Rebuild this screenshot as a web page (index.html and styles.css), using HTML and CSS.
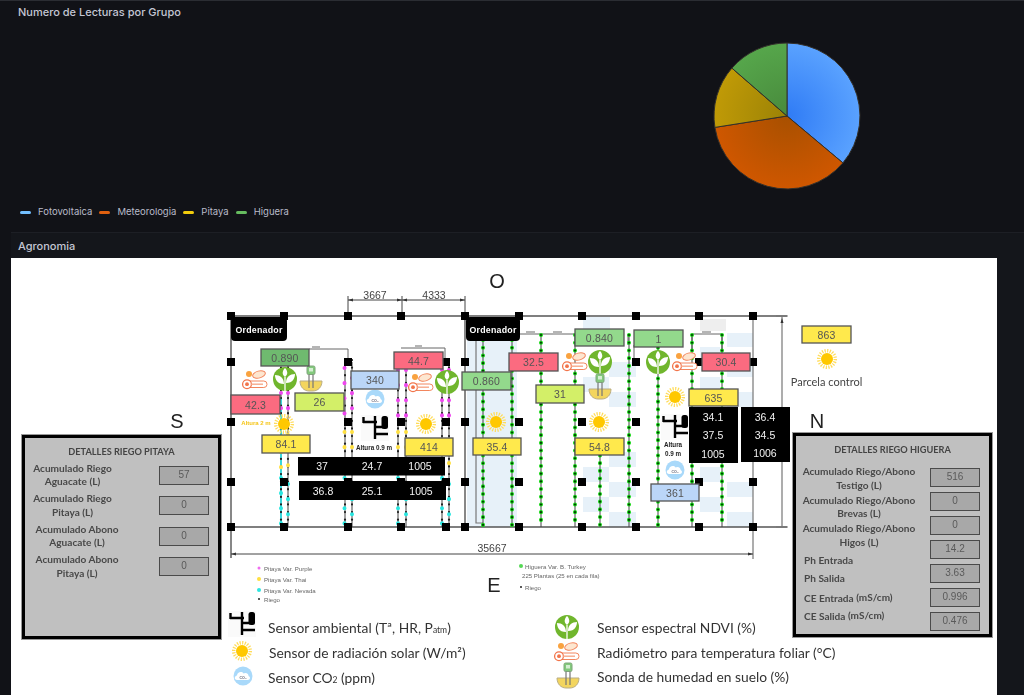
FILE: index.html
```html
<!DOCTYPE html>
<html lang="es">
<head>
<meta charset="utf-8">
<title>Agronomia</title>
<link rel="stylesheet" href="styles.css">
</head>
<body>
<section class="pie-panel">
  <h2 class="panel-title">Numero de Lecturas por Grupo</h2>
  <div class="pie-area">
    <svg class="pie" width="148" height="148" viewBox="-74 -74 148 148" aria-label="Numero de lecturas">
      <defs>
        <radialGradient id="gb" gradientUnits="userSpaceOnUse" cx="0" cy="0" r="73"><stop offset="0" stop-color="#2f7bf5"/><stop offset="1" stop-color="#5aa2ff"/></radialGradient>
        <radialGradient id="go" gradientUnits="userSpaceOnUse" cx="0" cy="0" r="73"><stop offset="0" stop-color="#a85000"/><stop offset="1" stop-color="#cf5700"/></radialGradient>
        <radialGradient id="gy" gradientUnits="userSpaceOnUse" cx="0" cy="0" r="73"><stop offset="0" stop-color="#9b8206"/><stop offset="1" stop-color="#c09a06"/></radialGradient>
        <radialGradient id="gg" gradientUnits="userSpaceOnUse" cx="0" cy="0" r="73"><stop offset="0" stop-color="#488a3c"/><stop offset="1" stop-color="#56a64b"/></radialGradient>
      </defs>
      <path class="slice" fill="url(#gb)" d="M0 0V-73A73 73 0 0 1 55.9 46.9Z"/>
      <path class="slice" fill="url(#go)" d="M0 0L55.9 46.9A73 73 0 0 1 -72.1 11.4Z"/>
      <path class="slice" fill="url(#gy)" d="M0 0L-72.1 11.4A73 73 0 0 1 -55.1 -47.9Z"/>
      <path class="slice" fill="url(#gg)" d="M0 0L-55.1 -47.9A73 73 0 0 1 0 -73Z"/>
    </svg>
  </div>
  <ul class="legend">
    <li class="legend-item"><span class="swatch swatch-blue"></span>Fotovoltaica</li>
    <li class="legend-item"><span class="swatch swatch-orange"></span>Meteorologia</li>
    <li class="legend-item"><span class="swatch swatch-yellow"></span>Pitaya</li>
    <li class="legend-item"><span class="swatch swatch-green"></span>Higuera</li>
  </ul>
</section>

<section class="agro-panel">
  <h2 class="panel-title agro-title">Agronomia</h2>
  <div class="canvas">
    <svg class="plan" width="986" height="437" viewBox="11 258 986 437">
      <defs>
        <g id="sun"><circle r="8.3" class="sun-rays"/><circle r="6" class="sun-core"/></g>
        <g id="ndvi">
          <circle r="12" fill="#70b62d"/>
          <path fill="#fff" d="M-1 5C-8 5-10 0-10-4-5-4-1-1-1 5ZM1 4C8 4 10-1 10-5 5-5 1-2 1 4ZM0-2C-4-5-2-9 0-11 2-9 4-5 0-2Z"/>
          <path stroke="#fff" stroke-width="1.3" fill="none" d="M0 12V-2"/>
        </g>
        <g id="radio">
          <circle cx="-6" cy="-6" r="3" fill="#f9a23f"/>
          <ellipse cx="4" cy="-5.5" rx="6.5" ry="3.5" transform="rotate(-15 4 -5.500)" fill="#fde6d0" stroke="#f2865e"/>
          <rect x="-9" y="1" width="21" height="6.5" rx="3.2" fill="#fff" stroke="#f2865e"/>
          <circle cx="-8" cy="4.2" r="4.4" fill="#fff" stroke="#f2744a" stroke-width="1.3"/>
          <circle cx="-8" cy="4.2" r="1.9" fill="#f2744a"/>
          <path d="M-4 4.2H8" stroke="#f7a98a" stroke-width="1.4"/>
        </g>
        <g id="soil">
          <path fill="#f3d55e" stroke="#b9ad84" d="M-11 2H11C11 8 7 12 2 12H-2C-7 12-11 8-11 2Z"/>
          <rect x="-4" y="-13" width="8" height="8.5" rx="1.5" fill="#82c97c" stroke="#7fa67a"/>
          <rect x="-2" y="-11" width="4" height="3.500" fill="#d5eed2"/>
          <path stroke="#777" stroke-width="1.2" fill="none" d="M-2-4.500V9M2-4.500V9"/>
        </g>
        <g id="co2">
          <circle r="9.5" fill="#a9d9fa"/>
          <path fill="#fff" d="M-6 4C-9 4-9 0-6-.5-6-4-1-5 .5-2.5 3-4 6-2 5.5 0 8 1 7 4 5 4Z"/>
          <text class="co2-mini" y="1.6">CO₂</text>
        </g>
        <g id="amb">
          <rect x="-14" y="-13" width="28" height="26" fill="#fafafa"/>
          <path stroke="#000" stroke-width="2.4" fill="none" d="M-12-6H2M-11.5-11V-5M0-12V11M0-1H8M0 6H13"/>
          <rect x="6.5" y="-12" width="6.5" height="13" rx="2.5"/>
        </g>
      </defs>

      <!-- background patches -->
      <path class="patch" d="M467 340h50v187h-50zM583 317h27v16h-27zM727 333h26v14h-26zM700 347h20v15h-20zM727 362h26v15h-26zM700 377h20v15h-20zM727 392h26v15h-26zM609 362h27v15h-27zM583 377h26v15h-26zM609 392h27v15h-27zM609 452h27v15h-27zM583 467h26v15h-26zM609 482h27v15h-27zM583 497h26v15h-26zM609 512h27v15h-27zM700 467h20v15h-20zM727 482h26v15h-26zM700 497h20v15h-20zM727 512h26v15h-26z"/>
      <rect class="patch-grey" x="700" y="319" width="26" height="12"/>

      <!-- structure -->
      <path class="wall" d="M231 316H787M231 527H787M231 316V558M465 316V527"/>
      <path class="wall-light" d="M476 340V523H483M753 316V559M782 316V527M776 527H788M776 316H788"/>
      <path class="dim" d="M231 554H753M348 296V316M402 296V316M465 296V316M348 300H465"/>
      <path class="arrow" d="M348 300l5-1.500v3zM402 300l-5-1.500v3zM402 300l5-1.500v3zM465 300l-5-1.500v3zM231 554l5-1.500v3zM753 554l-5-1.500v3zM782 318l-1.500 5h3z"/>
      <path class="conn" d="M309 349H348V362M401 348H445V362M520 334H575M514 334H519M692 334H722M692 334V352M722 334V352M628 334V345M634 345V362"/>
      <path class="tick" d="M526 331h9v4h-9zM553 331h9v4h-9zM702 331h9v4h-9zM312 346h8v3h-8zM415 345h7v3h-7z"/>

      <!-- pitaya rows -->
      <path class="row-line" d="M281 392V527M288 362V527M345 362V527M352 362V527M398 362V527M406 362V527M442 362V527M449 362V527"/>
      <path class="cyan-line" d="M281 398V527"/>
      <path class="dots dots-black" d="M281 360V527M288 360V527M345 360V527M352 360V527M398 360V527M406 360V527M442 360V527M449 360V527"/>
      <path class="dots dots-magenta" d="M288 393V422M281 393V422M344.500 368V420M352 378V422M398 370V422M406 370V422M442 370V422M449 370V422"/>
      <path class="dots dots-yellow" d="M281 452V475M288 435V470M344.500 432V470M352 432V470M398 432V470M406 432V470M442 448V470M449 448V470"/>
      <path class="dots dots-cyan" d="M281 478V527M288 484V527M344.500 478V527M352 484V527M398 478V527M406 484V527M442 478V527M449 484V527"/>

      <!-- higuera rows -->
      <path class="row-line" d="M483 340V527M512 340V527M541 335V527M575 335V527M600 440V527M629 335V527M658 340V527M692 335V527M722 335V527"/>
      <path class="dots dots-green" d="M483 340V527M512 340V527M541 335V527M575 335V527M600 440V527M629 335V527M658 340V527M692 335V527M722 335V527"/>
      <path class="dots dots-dark" d="M483 340V527M512 340V527M541 335V527M575 335V527M600 440V527M629 335V527M658 340V527M692 335V527M722 335V527"/>

      <!-- posts -->
      <path d="M227 312h8v8h-8zM280 312h8v8h-8zM344 312h8v8h-8zM397 312h8v8h-8zM461 312h8v8h-8zM515 312h8v8h-8zM578 312h8v8h-8zM632 312h8v8h-8zM695 312h8v8h-8zM749 312h8v8h-8zM227 358h8v8h-8zM344 358h8v8h-8zM442 358h8v8h-8zM461 358h8v8h-8zM632 358h8v8h-8zM695 358h8v8h-8zM749 358h8v8h-8zM227 418h8v8h-8zM344 418h8v8h-8zM397 418h8v8h-8zM442 418h8v8h-8zM461 418h8v8h-8zM515 418h8v8h-8zM578 418h8v8h-8zM632 418h8v8h-8zM227 478h8v8h-8zM280 478h8v8h-8zM344 478h8v8h-8zM397 478h8v8h-8zM442 478h8v8h-8zM461 478h8v8h-8zM515 478h8v8h-8zM578 478h8v8h-8zM632 478h8v8h-8zM695 478h8v8h-8zM749 478h8v8h-8zM227 523h8v8h-8zM280 523h8v8h-8zM344 523h8v8h-8zM397 523h8v8h-8zM442 523h8v8h-8zM461 523h8v8h-8zM515 523h8v8h-8zM578 523h8v8h-8zM632 523h8v8h-8zM695 523h8v8h-8zM749 523h8v8h-8z"/>

      <!-- ordenador -->
      <rect x="231" y="317" width="56" height="24" rx="4"/>
      <rect x="466" y="317" width="54" height="24" rx="4"/>
      <text class="t-ord" x="259" y="329.500">Ordenador</text>
      <text class="t-ord" x="493" y="329.500">Ordenador</text>

      <!-- dimensions and compass -->
      <text class="t-dim" x="375" y="295">3667</text>
      <text class="t-dim" x="434" y="295">4333</text>
      <text class="t-dim" x="492" y="548">35667</text>
      <text class="t-compass" x="497" y="281">O</text>
      <text class="t-compass" x="177" y="421">S</text>
      <text class="t-compass" x="817" y="421">N</text>
      <text class="t-compass" x="494" y="585">E</text>

      <!-- icons in plan -->
      <use href="#ndvi" x="285" y="379"/><use href="#ndvi" x="447" y="382"/><use href="#ndvi" x="600" y="362"/><use href="#ndvi" x="658" y="362"/>
      <use href="#radio" x="255" y="380"/><use href="#radio" x="421" y="383"/><use href="#radio" x="575" y="362"/><use href="#radio" x="685" y="362"/>
      <use href="#soil" x="311" y="379"/><use href="#soil" x="600" y="387"/>
      <use href="#sun" x="284" y="424"/><use href="#sun" x="426" y="424"/><use href="#sun" x="496" y="422"/><use href="#sun" x="599" y="422"/><use href="#sun" x="675" y="397"/><use href="#sun" x="827" y="359"/>
      <use href="#co2" x="375" y="399"/><use href="#co2" x="675" y="470"/>
      <use href="#amb" x="375" y="428"/><use href="#amb" x="675" y="427"/>
      <text class="t-alt2" x="256" y="423">Altura 2 m</text>
      <text class="t-alt" x="374" y="447">Altura 0.9 m</text>
      <text class="t-alt" x="673" y="444">Altura</text>
      <text class="t-alt" x="673" y="453.500">0.9 m</text>

      <!-- reading boxes -->
      <g class="box">
        <rect class="b-green" x="261" y="349" width="48" height="17"/><text class="v" x="285" y="357.500">0.890</text>
        <rect class="b-red" x="231" y="395" width="49" height="19"/><text class="v" x="255.500" y="404.500">42.3</text>
        <rect class="b-lime" x="295" y="393" width="49" height="18"/><text class="v" x="319.500" y="402">26</text>
        <rect class="b-yellow" x="262" y="435" width="48" height="18"/><text class="v" x="286" y="444">84.1</text>
        <rect class="b-blue" x="351" y="371" width="48" height="18"/><text class="v" x="375" y="380">340</text>
        <rect class="b-red" x="394" y="352" width="49" height="17"/><text class="v" x="418.500" y="360.500">44.7</text>
        <rect class="b-yellow" x="405" y="438" width="48" height="18"/><text class="v" x="429" y="447">414</text>
        <rect class="b-lgreen" x="462" y="372" width="49" height="18"/><text class="v" x="486.500" y="381">0.860</text>
        <rect class="b-red" x="509" y="353" width="49" height="18"/><text class="v" x="533.500" y="362">32.5</text>
        <rect class="b-lgreen" x="575" y="329" width="49" height="17"/><text class="v" x="599.500" y="337.500">0.840</text>
        <rect class="b-lgreen" x="634" y="330" width="49" height="17"/><text class="v" x="658.500" y="338.500">1</text>
        <rect class="b-lime" x="536" y="385" width="48" height="18"/><text class="v" x="560" y="394">31</text>
        <rect class="b-red" x="702" y="353" width="48" height="18"/><text class="v" x="726" y="362">30.4</text>
        <rect class="b-yellow" x="689" y="389" width="49" height="17"/><text class="v" x="713.500" y="397.500">635</text>
        <rect class="b-yellow" x="473" y="438" width="48" height="17"/><text class="v" x="497" y="446.500">35.4</text>
        <rect class="b-yellow" x="575" y="438" width="49" height="17"/><text class="v" x="599.500" y="446.500">54.8</text>
        <rect class="b-blue" x="651" y="484" width="48" height="17"/><text class="v" x="675" y="492.500">361</text>
        <rect class="b-yellow" x="802" y="326" width="49" height="17"/><text class="v" x="826.500" y="334.500">863</text>
      </g>

      <!-- black readings -->
      <rect x="298" y="457" width="147" height="18.500"/>
      <rect x="299" y="481" width="147" height="19"/>
      <rect x="689" y="407" width="49" height="56"/>
      <rect x="741" y="407" width="49" height="55"/>
      <g class="dark-values">
        <text x="322" y="466">37</text><text x="372" y="466">24.7</text><text x="420" y="466">1005</text>
        <text x="323" y="490.500">36.8</text><text x="372" y="490.500">25.1</text><text x="421" y="490.500">1005</text>
        <text x="713" y="417">34.1</text><text x="713" y="435">37.5</text><text x="713" y="453.500">1005</text>
        <text x="765" y="417">36.4</text><text x="765" y="435">34.5</text><text x="765" y="453">1006</text>
      </g>
      <text class="t-parcela" x="826.500" y="381">Parcela control</text>

      <!-- small legends -->
      <circle cx="259" cy="568" r="1.500" fill="#f06cf0"/><circle cx="259" cy="579" r="2" fill="#ffe040"/><circle cx="259" cy="590" r="2" fill="#2ee6e0"/><circle cx="259" cy="599" r="1" fill="#222"/>
      <text class="t-small" x="264" y="568">Pitaya Var. Purple</text>
      <text class="t-small" x="264" y="579">Pitaya Var. Thai</text>
      <text class="t-small" x="264" y="590">Pitaya Var. Nevada</text>
      <text class="t-small" x="264" y="599">Riego</text>
      <circle cx="521" cy="566" r="2" fill="#55d855"/><circle cx="521" cy="587" r="1" fill="#222"/>
      <text class="t-small" x="525" y="566">Higuera Var. B. Turkey</text>
      <text class="t-small" x="522" y="575">225 Plantas (25 en cada fila)</text>
      <text class="t-small" x="525" y="587">Riego</text>

      <!-- bottom legend -->
      <use href="#amb" x="242" y="624"/><use href="#sun" x="242" y="651"/><use href="#co2" x="243" y="676"/>
      <use href="#ndvi" x="567" y="627"/><use href="#radio" x="567" y="652"/><use href="#soil" x="568" y="676"/>
      <text class="t-key" x="268" y="627">Sensor ambiental (Tª, HR, P<tspan class="t-sub" dy="3">atm</tspan><tspan dy="-3">)</tspan></text>
      <text class="t-key" x="269" y="652">Sensor de radiación solar (W/m²)</text>
      <text class="t-key" x="268" y="677">Sensor CO<tspan class="t-sub" dy="3">2</tspan><tspan dy="-3"> (ppm)</tspan></text>
      <text class="t-key" x="597" y="627">Sensor espectral NDVI (%)</text>
      <text class="t-key" x="597" y="652">Radiómetro para temperatura foliar (°C)</text>
      <text class="t-key" x="597" y="676">Sonda de humedad en suelo (%)</text>
    </svg>

    <aside class="details details-pitaya">
      <h3 class="details-title">DETALLES RIEGO PITAYA</h3>
      <div class="pitaya-grid">
        <p class="lbl">Acumulado Riego<br>Aguacate (L)</p><span class="val">57</span>
        <p class="lbl">Acumulado Riego<br>Pitaya (L)</p><span class="val">0</span>
        <p class="lbl lbl-shift">Acumulado Abono<br>Aguacate (L)</p><span class="val">0</span>
        <p class="lbl lbl-shift">Acumulado Abono<br>Pitaya (L)</p><span class="val">0</span>
      </div>
    </aside>

    <aside class="details details-higuera">
      <h3 class="details-title">DETALLES RIEGO HIGUERA</h3>
      <div class="higuera-body">
        <div class="higuera-labels">
          <p class="lbl lbl-double">Acumulado Riego/Abono<br>Testigo (L)</p>
          <p class="lbl lbl-double">Acumulado Riego/Abono<br>Brevas (L)</p>
          <p class="lbl lbl-double">Acumulado Riego/Abono<br>Higos (L)</p>
          <p class="lbl lbl-single">Ph Entrada</p>
          <p class="lbl lbl-single">Ph Salida</p>
          <p class="lbl lbl-single">CE Entrada <span class="unit">(mS/cm)</span></p>
          <p class="lbl lbl-single">CE Salida <span class="unit">(mS/cm)</span></p>
        </div>
        <div class="higuera-values">
          <span class="val">516</span><span class="val">0</span><span class="val">0</span><span class="val">14.2</span><span class="val">3.63</span><span class="val">0.996</span><span class="val">0.476</span>
        </div>
      </div>
    </aside>
  </div>
</section>
</body>
</html>
```
FILE: styles.css
```css
* { box-sizing: border-box; }
html, body { margin: 0; padding: 0; }
body {
  width: 1024px;
  height: 695px;
  overflow: hidden;
  background: #111217;
  font-family: Inter, "Liberation Sans", sans-serif;
  color: #ccccdc;
}
.panel-title {
  margin: 0;
  font-size: 11px;
  font-weight: 500;
  line-height: 14px;
  color: #c4c6d4;
}
.pie-panel {
  height: 232px;
  padding: 4px 0 0 18px;
  border-top: 1px solid #2b2d33;
  display: flex;
  flex-direction: column;
}
.pie-area {
  display: flex;
  justify-content: flex-end;
  padding: 23px 145px 0 0;
  height: 176px;
  margin-right: 18px;
  margin-left: -18px;
}
.pie { display: block; flex: none; }
.slice { stroke: #33302b; stroke-width: 1; }
.legend {
  list-style: none;
  display: flex;
  gap: 7px;
  margin: 11px 0 0 2px;
  padding: 0;
}
.legend-item {
  display: flex;
  align-items: center;
  gap: 7px;
  font-size: 9.5px;
  line-height: 12px;
  color: #b9bbc9;
}
.swatch { width: 11px; height: 3px; border-radius: 2px; }
.swatch-blue { background: #73bfff; }
.swatch-orange { background: #e0600f; }
.swatch-yellow { background: #f2cc0c; }
.swatch-green { background: #66bb5f; }

.agro-panel {
  margin-left: 11px;
  border-top: 1px solid #1d1f25;
  background: #14161b;
}
.agro-title {
  height: 25px;
  padding: 6px 0 0 7px;
  font-size: 11px;
}
.canvas {
  position: relative;
  width: 986px;
  height: 437px;
  background: #fff;
  overflow: hidden;
}
.plan { display: block; filter: blur(.4px); }

.patch { fill: #e7f1f9; }
.patch-grey { fill: #eeeeee; }
.wall { fill: none; stroke: #555; stroke-width: 1.4; }
.wall-light { fill: none; stroke: #777; stroke-width: 1.2; }
.dim { fill: none; stroke: #444; stroke-width: 1; }
.arrow { fill: #333; }
.conn { fill: none; stroke: #666; stroke-width: 1; }
.tick { fill: #b5b5b5; }
.row-line { fill: none; stroke: #444; stroke-width: 1; }
.cyan-line { fill: none; stroke: #1fe3ea; stroke-width: 1.6; }
.dots { fill: none; stroke-linecap: round; }
.dots-black { stroke: #222; stroke-width: 2.2; stroke-dasharray: .1 7.5; }
.dots-magenta { stroke: #ee46ee; stroke-width: 4; stroke-dasharray: .1 15; }
.dots-yellow { stroke: #ffe040; stroke-width: 4; stroke-dasharray: .1 15; }
.dots-cyan { stroke: #27e6e0; stroke-width: 4; stroke-dasharray: .1 15; }
.dots-green { stroke: #14d614; stroke-width: 4; stroke-dasharray: .1 7.6; }
.dots-dark { stroke: #063006; stroke-width: 2; stroke-dasharray: .1 7.6; }

.sun-rays { fill: none; stroke: #ffdc5a; stroke-width: 3.4; stroke-dasharray: 1.2 1.4; }
.sun-core { fill: #ffc800; }
.co2-mini { font: 700 3.6px "Liberation Sans", sans-serif; fill: #667; text-anchor: middle; }

.plan text { dominant-baseline: central; }
.t-ord { font: 700 8.8px "Liberation Sans", sans-serif; fill: #fff; text-anchor: middle; letter-spacing: .25px; }
.t-dim { font: 400 10.5px "Liberation Sans", sans-serif; fill: #444; text-anchor: middle; }
.t-compass { font: 400 20px "Liberation Sans", sans-serif; fill: #222; text-anchor: middle; }
.t-alt2 { font: 700 6px "Liberation Sans", sans-serif; fill: #f5c518; text-anchor: middle; }
.t-alt { font: 700 6.3px "Liberation Sans", sans-serif; fill: #222; text-anchor: middle; }
.t-parcela { font: 400 11px Lato, sans-serif; fill: #444; text-anchor: middle; }
.t-small { font: 400 6.1px "Liberation Sans", sans-serif; fill: #666; }
.t-key { font: 400 13.8px Lato, sans-serif; fill: #333; }
.t-sub { font-size: 8.5px; }

.box rect { stroke: #555; stroke-width: 1.3; }
.v { font: 400 10.5px "Liberation Sans", sans-serif; fill: #555; text-anchor: middle; letter-spacing: .2px; }
.b-green { fill: #6fba6f; }
.b-lgreen { fill: #93d98c; }
.b-red { fill: #fb6b80; }
.b-lime { fill: #d3ef68; }
.b-yellow { fill: #ffe94c; }
.b-blue { fill: #bbd6f8; }
.dark-values text { font: 400 10.5px "Liberation Sans", sans-serif; fill: #f2f2f2; text-anchor: middle; }

.details {
  position: absolute;
  width: 199px;
  background: #c0c0c0;
  border: 3px solid #000;
  outline: 1px solid #9a9a9a;
  font-family: Lato, sans-serif;
  color: #444;
  filter: blur(.3px);
}
.details-pitaya { left: 11px; top: 177px; height: 204px; }
.details-higuera { left: 782px; top: 175px; height: 204px; }
.details-title {
  margin: 0;
  padding-top: 8px;
  height: 23px;
  font-size: 9.2px;
  line-height: 12px;
  font-weight: 700;
  text-align: center;
  color: #444;
}
.lbl {
  margin: 0;
  font-size: 10.1px;
  font-weight: 700;
  line-height: 13.5px;
  text-align: center;
  color: #484848;
  white-space: nowrap;
}
.lbl-shift { padding-left: 9px; }
.val {
  display: block;
  height: 19px;
  width: 50px;
  background: #a8a8a8;
  border: 1.5px solid #4a4a4a;
  font: 400 10px/16px "Liberation Sans", sans-serif;
  text-align: center;
  color: #5a5a5a;
}
.pitaya-grid {
  display: grid;
  grid-template-columns: 95px 50px;
  grid-auto-rows: 30.5px;
  justify-content: space-between;
  align-items: center;
  padding: 0 9px 0 0;
  margin-top: -1px;
}
.higuera-body {
  display: flex;
  justify-content: space-between;
  padding: 6px 9px 0 0;
}
.higuera-labels { width: 126px; }
.lbl-double { height: 28.6px; }
.lbl-single { height: 18.5px; line-height: 18.5px; text-align: left; padding-left: 8px; }
.unit { font-size: 10px; vertical-align: 1px; }
.higuera-values {
  display: flex;
  flex-direction: column;
  gap: 5.15px;
  margin-top: 2.5px;
}
```
